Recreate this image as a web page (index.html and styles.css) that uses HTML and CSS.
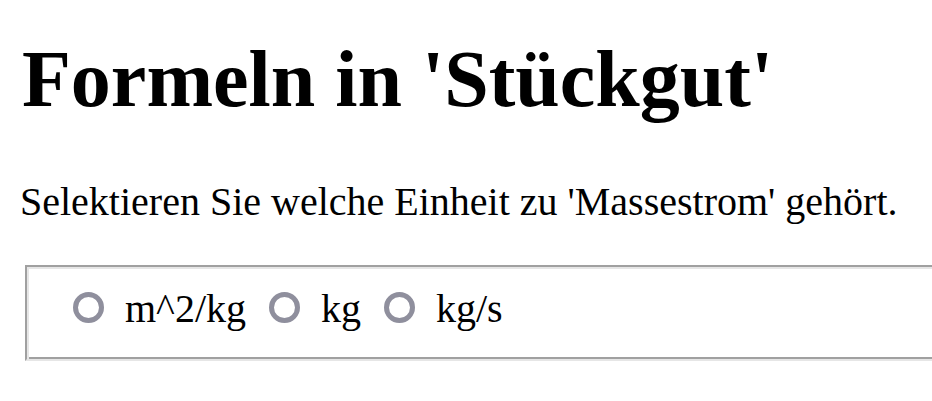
FILE: index.html
```html
<!DOCTYPE html>
<html lang="de">
<head>
<meta charset="utf-8">
<title>Formeln in 'Stückgut'</title>
<link rel="stylesheet" href="styles.css">
</head>
<body>
<main class="page">
  <h1 class="title">Formeln in 'Stückgut'</h1>
  <p class="question">Selektieren Sie welche Einheit zu 'Massestrom' gehört.</p>
  <fieldset class="choices">
    <label class="choice"><span class="radio"></span><span>m^2/kg</span></label>
    <label class="choice"><span class="radio"></span><span>kg</span></label>
    <label class="choice"><span class="radio"></span><span>kg/s</span></label>
  </fieldset>
</main>
</body>
</html>
```
FILE: styles.css
```css
html, body {
  margin: 0;
  padding: 0;
  background: #ffffff;
  overflow: hidden;
}
body {
  font-family: "Liberation Serif", "Times New Roman", serif;
  color: #000000;
}
.page {
  padding-left: 20px;
}
.title {
  font-size: 80px;
  font-weight: bold;
  line-height: 92px;
  margin: 33px 0 0 2px;
}
.question {
  font-size: 40px;
  line-height: 46px;
  margin: 53.5px 0 0 0;
}
.choices {
  box-sizing: border-box;
  width: 1000px;
  min-width: 0;
  margin: 40.5px 0 0 5px;
  padding: 18.5px 0 27.5px 46px;
  border-style: solid;
  border-width: 2px;
  border-color: #a0a0a0 #e6e6e6 #e6e6e6 #a0a0a0;
  box-shadow: inset 2px 2px 0 #e6e6e6, inset -2px -2px 0 #a0a0a0;
  display: flex;
  align-items: center;
  gap: 23px;
  font-size: 40px;
  line-height: 46px;
}
.choice {
  display: flex;
  align-items: center;
  gap: 21px;
}
.radio {
  display: block;
  flex: none;
  box-sizing: border-box;
  width: 31px;
  height: 31px;
  margin-top: -3px;
  border: 5px solid #8f8f9d;
  border-radius: 50%;
  background: #ffffff;
}
```
